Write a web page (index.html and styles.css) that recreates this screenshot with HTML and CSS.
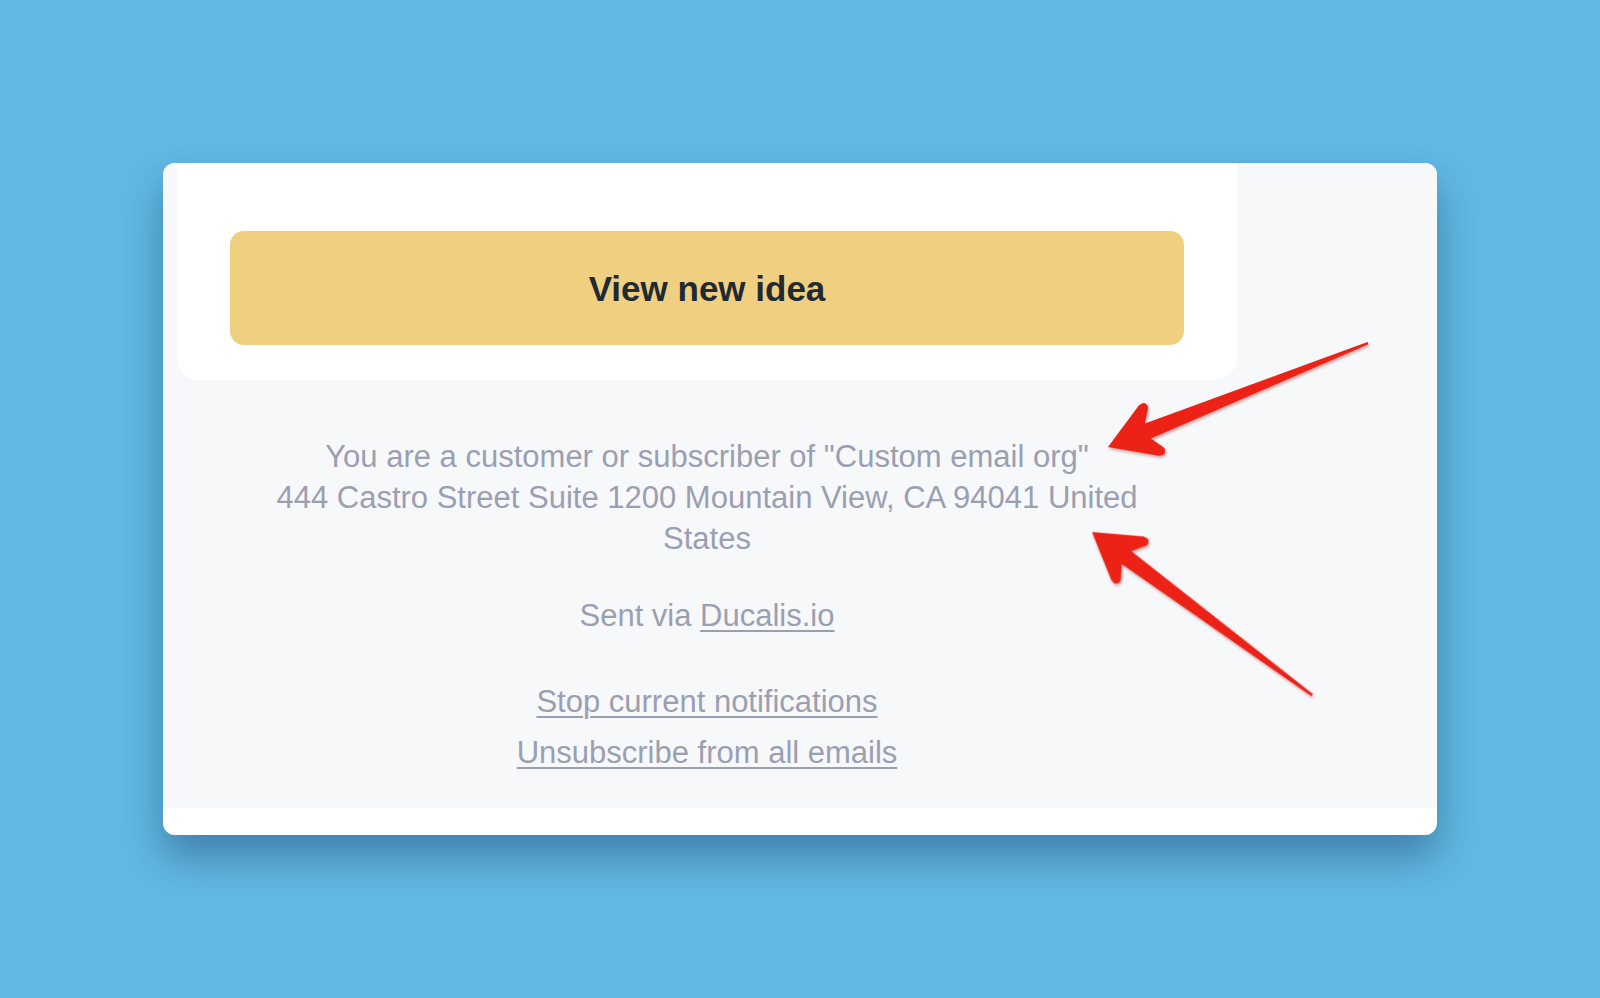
FILE: index.html
```html
<!DOCTYPE html>
<html>
<head>
<meta charset="utf-8">
<link rel="stylesheet" href="styles.css">
</head>
<body>
<div class="card">
  <div class="email">
    <div class="column">
      <div class="panel">
        <a class="btn">View new idea</a>
      </div>
      <div class="footer">
        <p class="addr">You are a customer or subscriber of "Custom email org"<br>444 Castro Street Suite 1200 Mountain View, CA 94041 United States</p>
        <p class="sent">Sent via <a class="link">Ducalis.io</a></p>
        <div class="links">
          <a class="link">Stop current notifications</a>
          <a class="link">Unsubscribe from all emails</a>
        </div>
      </div>
    </div>
  </div>
</div>
<svg class="arrows" width="1600" height="998" viewBox="0 0 1600 998">
  <defs>
    <filter id="sh" x="-20%" y="-20%" width="140%" height="140%">
      <feDropShadow dx="1" dy="2" stdDeviation="1.5" flood-color="#7a0000" flood-opacity="0.35"/>
    </filter>
  </defs>
  <g filter="url(#sh)" fill="#ec2117">
    <path transform="translate(1108 447) rotate(-21.8)" d="M0 0 L44 -27 Q52 -30 52 -22 L43 -8 L280 -1.2 L280 1.2 L43 8 L52 22 Q52 30 44 27 Z"/>
    <path transform="translate(1092 532) rotate(36.54)" d="M0 0 L44 -27 Q52 -30 52 -22 L43 -8 L274 -1.2 L274 1.2 L43 8 L52 22 Q52 30 44 27 Z"/>
  </g>
</svg>
</body>
</html>
```
FILE: styles.css
```css
html, body {
  margin: 0;
  padding: 0;
}
body {
  background: #62b9e4;
  width: 1600px;
  height: 998px;
  overflow: hidden;
  position: relative;
  font-family: "Liberation Sans", Arial, Helvetica, sans-serif;
}
.card {
  margin: 163px 0 0 163px;
  width: 1274px;
  height: 672px;
  background: #ffffff;
  border-radius: 12px;
  overflow: hidden;
  box-shadow: 0 22px 40px rgba(20, 60, 100, 0.45);
}
.email {
  background: #f7f8fa;
  height: 645px;
}
.column {
  width: 1060px;
  margin-left: 14px;
}
.panel {
  background: #ffffff;
  border-radius: 0 0 22px 22px;
  padding: 68px 53px 35px;
}
.btn {
  display: flex;
  align-items: center;
  justify-content: center;
  box-sizing: border-box;
  height: 114px;
  padding-top: 2px;
  background: #f0cf80;
  border-radius: 14px;
  font-weight: bold;
  font-size: 35px;
  color: #1f2a33;
}
.footer {
  width: 900px;
  margin: 0 auto;
  text-align: center;
  color: #9b9fb2;
  font-size: 31px;
  line-height: 41px;
  padding-top: 56px;
}
.footer p {
  margin: 0;
}
.sent {
  margin-top: 36px !important;
}
.link {
  color: #9b9fb2;
  text-decoration: underline;
  text-underline-offset: 4px;
  text-decoration-thickness: 2px;
}
.links {
  margin-top: 45px;
  display: flex;
  flex-direction: column;
  align-items: center;
  gap: 10px;
}
.arrows {
  position: absolute;
  left: 0;
  top: 0;
}
```
